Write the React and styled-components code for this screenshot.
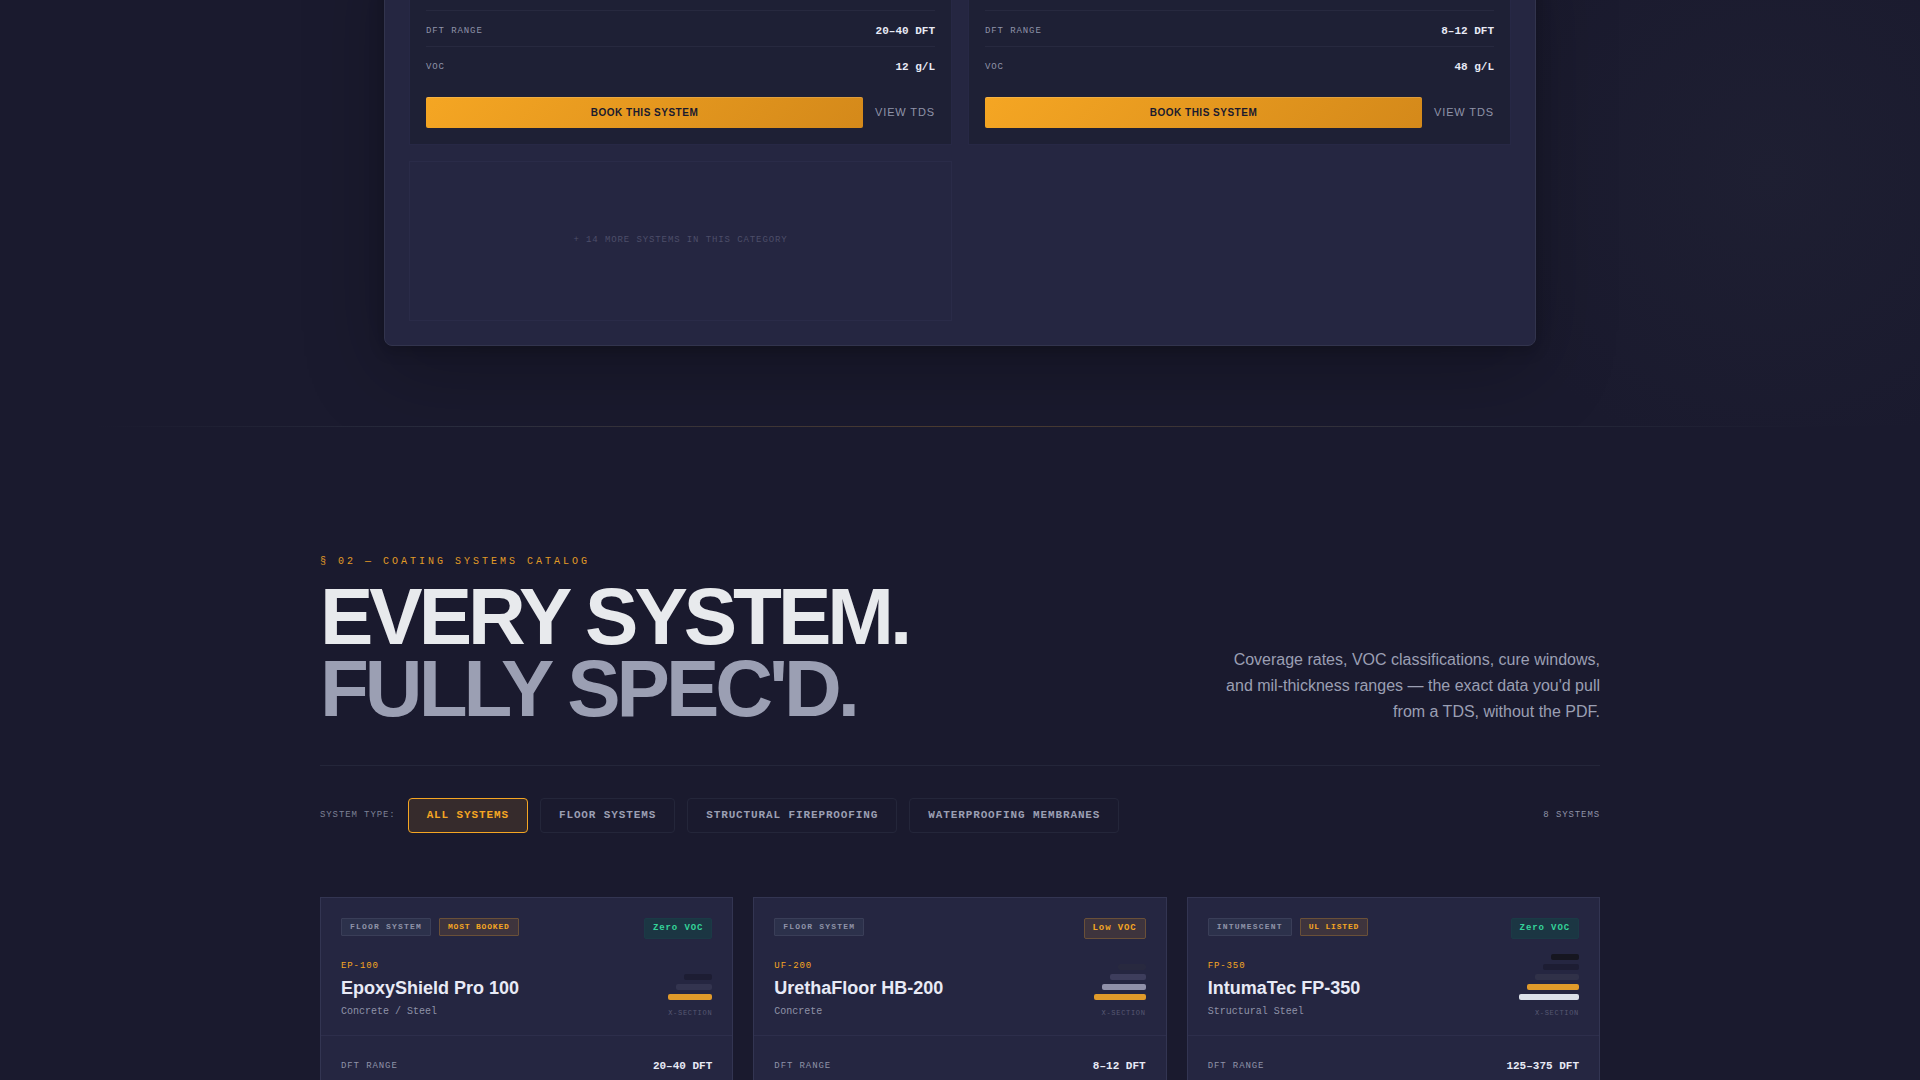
import { useState } from "react";
import styled, { createGlobalStyle, css } from "styled-components";

const sans = `"Liberation Sans", Arial, sans-serif`;
const mono = `"Liberation Mono", "Courier New", monospace`;

const GlobalStyle = createGlobalStyle`
  * {
    box-sizing: border-box;
  }
  body {
    margin: 0;
    background: #1a1a2e;
    color: #e8eaed;
    font-family: ${sans};
    font-size: 16px;
  }
  h2, h3, p, dl, dt, dd {
    margin: 0;
  }
`;

const Viewport = styled.main`
  height: 100vh;
  overflow: hidden;
`;

const BookingSection = styled.section`
  position: relative;
  margin-top: -67px;
  padding: 0 24px 80px;
  overflow: hidden;
`;

const Glow = styled.div`
  position: absolute;
  right: -150px;
  bottom: -48px;
  width: 600px;
  height: 600px;
  background: radial-gradient(circle, rgba(42, 45, 62, 0.25) 0%, transparent 70%);
  pointer-events: none;
`;

const Panel = styled.div`
  position: relative;
  max-width: 1152px;
  margin: 0 auto;
  padding: 24px;
  display: grid;
  grid-template-columns: 1fr 1fr;
  gap: 16px;
  background: #252641;
  border: 1px solid #32344d;
  border-radius: 8px;
  box-shadow: 0 24px 80px rgba(0, 0, 0, 0.25), 0 4px 16px rgba(0, 0, 0, 0.2);
`;

const SystemCard = styled.article`
  padding: 16px;
  background: #1e2035;
  background-clip: padding-box;
  border: 1px solid rgba(42, 45, 74, 0.4);
`;

const SpecRow = styled.div`
  display: flex;
  justify-content: space-between;
  align-items: flex-start;
  height: 36px;
  padding-top: 12px;
  border-bottom: 1px solid #27293f;

  &:last-child {
    border-bottom-color: transparent;
  }
`;

const SpecLabel = styled.dt`
  font: 9px/16px ${mono};
  letter-spacing: 0.1em;
  text-transform: uppercase;
  color: #8f93a8;
`;

const SpecValue = styled.dd`
  font: bold 11px/16px ${mono};
  color: #e8eaf6;
`;

const Actions = styled.div`
  display: flex;
  align-items: center;
  gap: 12px;
  margin-top: 14px;
`;

const BookButton = styled.button`
  flex: 1;
  height: 31px;
  padding: 0;
  border: 0;
  border-radius: 2px;
  background: linear-gradient(135deg, #f5a623, #d4891a);
  box-shadow: inset 0 1px 0 rgba(255, 255, 255, 0.15);
  color: #1a1a2e;
  font: bold 10px ${sans};
  letter-spacing: 0.05em;
  text-transform: uppercase;
  cursor: pointer;
`;

const TdsLink = styled.a`
  padding-bottom: 2px;
  font-size: 11px;
  line-height: 16px;
  letter-spacing: 0.08em;
  text-transform: uppercase;
  text-decoration: none;
  color: #8f93a8;
`;

const MoreSystems = styled.div`
  height: 160px;
  padding-bottom: 2px;
  display: flex;
  align-items: center;
  justify-content: center;
  border: 1px solid #2a2b48;
  font: 9px ${mono};
  letter-spacing: 0.1em;
  text-transform: uppercase;
  color: #4d4e69;
`;

const SectionRule = styled.div`
  height: 1px;
  background: linear-gradient(90deg, transparent 5%, #2a2d3e 25%, #4b3b2f 50%, #2a2d3e 75%, transparent 95%);
`;

const Catalog = styled.section`
  max-width: 1328px;
  margin: 0 auto;
  padding: 127px 24px 0;
`;

const CatalogHeader = styled.header`
  display: flex;
  justify-content: space-between;
  align-items: flex-end;
  padding-bottom: 40px;
  border-bottom: 1px solid #24263a;
`;

const Eyebrow = styled.p`
  margin-bottom: 12px;
  font: 10px/15px ${mono};
  letter-spacing: 0.3em;
  text-transform: uppercase;
  color: #e39c26;
`;

const Title = styled.h2`
  font-size: 80px;
  line-height: 72px;
  letter-spacing: -0.05em;
  text-transform: uppercase;

  span {
    display: block;
    color: #9b9fb3;
  }
`;

const Intro = styled.p`
  max-width: 384px;
  line-height: 26px;
  text-align: right;
  color: #9b9fb3;
`;

const FilterBar = styled.div`
  display: flex;
  align-items: center;
  gap: 12px;
  margin: 32px 0 64px;
`;

const FilterLabel = styled.span`
  padding-bottom: 2px;
  font: 9px ${mono};
  letter-spacing: 0.1em;
  text-transform: uppercase;
  color: #7d8195;
`;

const Count = styled(FilterLabel)`
  margin-left: auto;
  color: #8f93a8;
`;

const FilterButton = styled.button`
  height: 35px;
  padding: 0 18px 2px;
  background: transparent;
  border: 1px solid #24263a;
  border-radius: 4px;
  font: bold 11px ${mono};
  letter-spacing: 0.08em;
  text-transform: uppercase;
  color: #9b9fb3;
  cursor: pointer;
  ${(props) =>
    props.$active &&
    css`
      background: #362b2c;
      border-color: #f5a623;
      color: #f5a623;
    `}
`;

const ProductGrid = styled.div`
  display: grid;
  grid-template-columns: repeat(3, 1fr);
  gap: 20px;
`;

const ProductCard = styled.article`
  background: #252641;
  border: 1px solid #333552;
`;

const ProductTop = styled.div`
  padding: 20px 20px 16px;
  border-bottom: 1px solid #2d2e4b;
`;

const TagRow = styled.div`
  display: flex;
  justify-content: space-between;
  align-items: flex-start;
  height: 21px;
`;

const Tags = styled.div`
  display: flex;
  gap: 8px;
`;

const Tag = styled.span`
  padding: 0 8px;
  border: 1px solid #3a3e58;
  border-radius: 1px;
  background: #2c314b;
  font: bold 8px/16px ${mono};
  letter-spacing: 0.15em;
  text-transform: uppercase;
  color: #8f93a8;
  ${(props) =>
    props.$highlight &&
    css`
      border-color: #6a5038;
      background: #3e343d;
      letter-spacing: 0.1em;
      color: #f5a623;
    `}
`;

const VocBadge = styled.span`
  padding: 0 8px;
  border: 1px solid #1b3a46;
  border-radius: 2px;
  background: #1b3643;
  font: bold 9px/19px ${mono};
  letter-spacing: 0.1em;
  color: #34d399;
  ${(props) =>
    props.$low &&
    css`
      border-color: #6a5038;
      background: #3e343d;
      color: #f5a623;
    `}
`;

// tall layer stacks grow upwards, past the top of this row
const ProductInfo = styled.div`
  display: flex;
  justify-content: space-between;
  align-items: flex-end;
  height: 59px;
  margin-top: 21px;
`;

const Code = styled.p`
  font: 9px/12px ${mono};
  letter-spacing: 0.1em;
  color: #f5a623;
`;

const Name = styled.h3`
  margin: 4px 0;
  font-size: 18px;
  line-height: 24px;
  color: #e8eaf6;
`;

const Substrate = styled.p`
  font: 10px/15px ${mono};
  color: #8f93a8;
`;

const CrossSection = styled.div`
  display: flex;
  flex-direction: column;
  align-items: flex-end;
  gap: 4px;
  padding-bottom: 2px;
`;

const Layer = styled.div`
  height: 6px;
  border-radius: 2px;
`;

const CrossLabel = styled.span`
  margin-top: 5px;
  font: 7px/8px ${mono};
  letter-spacing: 0.1em;
  text-transform: uppercase;
  color: #565872;
`;

const ProductSpecs = styled.dl`
  padding: 10px 20px 24px;
`;

const systems = [
  { coverage: "80 sq ft/gal", dft: "20–40 DFT", voc: "12 g/L" },
  { coverage: "120 sq ft/gal", dft: "8–12 DFT", voc: "48 g/L" },
];

const filters = [
  "All Systems",
  "Floor Systems",
  "Structural Fireproofing",
  "Waterproofing Membranes",
];

// layers run from the top coat down to the substrate
const products = [
  {
    code: "EP-100",
    name: "EpoxyShield Pro 100",
    substrate: "Concrete / Steel",
    type: "Floor System",
    highlight: "Most Booked",
    voc: "Zero VOC",
    dft: "20–40 DFT",
    layers: ["#1d1d33", "#33344f", "#e09a2a"],
  },
  {
    code: "UF-200",
    name: "UrethaFloor HB-200",
    substrate: "Concrete",
    type: "Floor System",
    voc: "Low VOC",
    dft: "8–12 DFT",
    layers: ["#28293f", "#3d3d5c", "#9091a9", "#e09a2a"],
  },
  {
    code: "FP-350",
    name: "IntumaTec FP-350",
    substrate: "Structural Steel",
    type: "Intumescent",
    highlight: "UL Listed",
    voc: "Zero VOC",
    dft: "125–375 DFT",
    layers: ["#161620", "#1d1d33", "#303148", "#e09a2a", "#dce1e8"],
  },
];

function Spec({ label, value }) {
  return (
    <SpecRow>
      <SpecLabel>{label}</SpecLabel>
      <SpecValue>{value}</SpecValue>
    </SpecRow>
  );
}

function Product({ product }) {
  return (
    <ProductCard>
      <ProductTop>
        <TagRow>
          <Tags>
            <Tag>{product.type}</Tag>
            {product.highlight && <Tag $highlight>{product.highlight}</Tag>}
          </Tags>
          <VocBadge $low={product.voc === "Low VOC"}>{product.voc}</VocBadge>
        </TagRow>
        <ProductInfo>
          <div>
            <Code>{product.code}</Code>
            <Name>{product.name}</Name>
            <Substrate>{product.substrate}</Substrate>
          </div>
          <CrossSection>
            {product.layers.map((color, index) => (
              <Layer key={color} style={{ width: 28 + index * 8, background: color }} />
            ))}
            <CrossLabel>X-Section</CrossLabel>
          </CrossSection>
        </ProductInfo>
      </ProductTop>
      <ProductSpecs>
        <Spec label="DFT Range" value={product.dft} />
      </ProductSpecs>
    </ProductCard>
  );
}

function App() {
  const [active, setActive] = useState("All Systems");

  return (
    <Viewport>
      <GlobalStyle />
      <BookingSection>
        <Glow />
        <Panel>
          {systems.map((system) => (
            <SystemCard key={system.dft}>
              <dl>
                <Spec label="Coverage" value={system.coverage} />
                <Spec label="DFT Range" value={system.dft} />
                <Spec label="VOC" value={system.voc} />
              </dl>
              <Actions>
                <BookButton>Book This System</BookButton>
                <TdsLink href="#tds">View TDS</TdsLink>
              </Actions>
            </SystemCard>
          ))}
          <MoreSystems>+ 14 more systems in this category</MoreSystems>
        </Panel>
      </BookingSection>
      <SectionRule />
      <Catalog>
        <CatalogHeader>
          <div>
            <Eyebrow>§ 02 — Coating Systems Catalog</Eyebrow>
            <Title>
              Every System.
              <span>Fully Spec'd.</span>
            </Title>
          </div>
          <Intro>
            Coverage rates, VOC classifications, cure windows, and mil-thickness
            ranges — the exact data you'd pull from a TDS, without the PDF.
          </Intro>
        </CatalogHeader>
        <FilterBar>
          <FilterLabel>System Type:</FilterLabel>
          {filters.map((filter) => (
            <FilterButton
              key={filter}
              $active={filter === active}
              onClick={() => setActive(filter)}
            >
              {filter}
            </FilterButton>
          ))}
          <Count>8 Systems</Count>
        </FilterBar>
        <ProductGrid>
          {products.map((product) => (
            <Product key={product.code} product={product} />
          ))}
        </ProductGrid>
      </Catalog>
    </Viewport>
  );
}

export default App;
